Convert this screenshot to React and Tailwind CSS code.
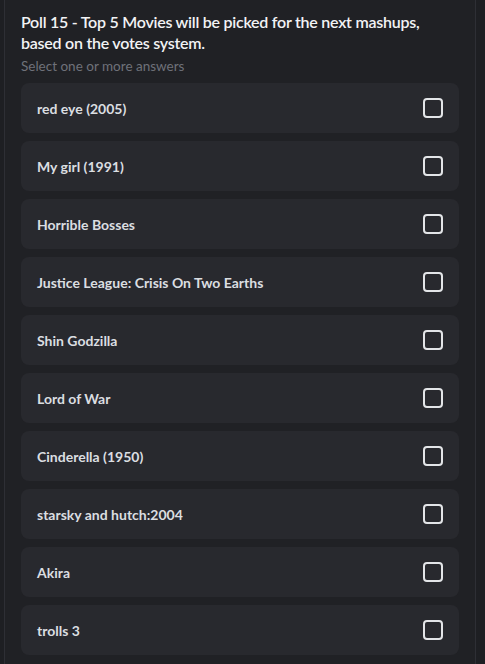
const answers = [
  "red eye (2005)",
  "My girl (1991)",
  "Horrible Bosses",
  "Justice League: Crisis On Two Earths",
  "Shin Godzilla",
  "Lord of War",
  "Cinderella (1950)",
  "starsky and hutch:2004",
  "Akira",
  "trolls 3",
];

function Option({ label }) {
  return (
    <div className="flex h-[50px] items-center justify-between rounded-lg bg-[#28292e] px-4">
      <span className="text-[14px] font-bold text-[#dbdee1]">{label}</span>
      <span className="h-5 w-5 rounded-[4px] border-2 border-[#e3e5e8]" />
    </div>
  );
}

export default function App() {
  return (
    <div
      className="h-[664px] overflow-hidden bg-[#1e1f23] pl-1 pr-[9px]"
      style={{ fontFamily: 'Lato, "Noto Sans", sans-serif' }}
    >
      <div className="h-full border-x border-[#2e2f35] bg-[#202125] px-4 pt-[11px]">
        <h1 className="text-[16px] leading-[21px] font-semibold tracking-[-0.25px] text-[#f2f3f5]">
          Poll 15 - Top 5 Movies will be picked for the next mashups, based on the votes system.
        </h1>
        <p className="mt-[4px] text-[13.5px] leading-[18px] text-[#6f717a]">Select one or more answers</p>
        <div className="mt-[8px] flex flex-col gap-2">
          {answers.map((a) => (
            <Option key={a} label={a} />
          ))}
        </div>
      </div>
    </div>
  );
}
